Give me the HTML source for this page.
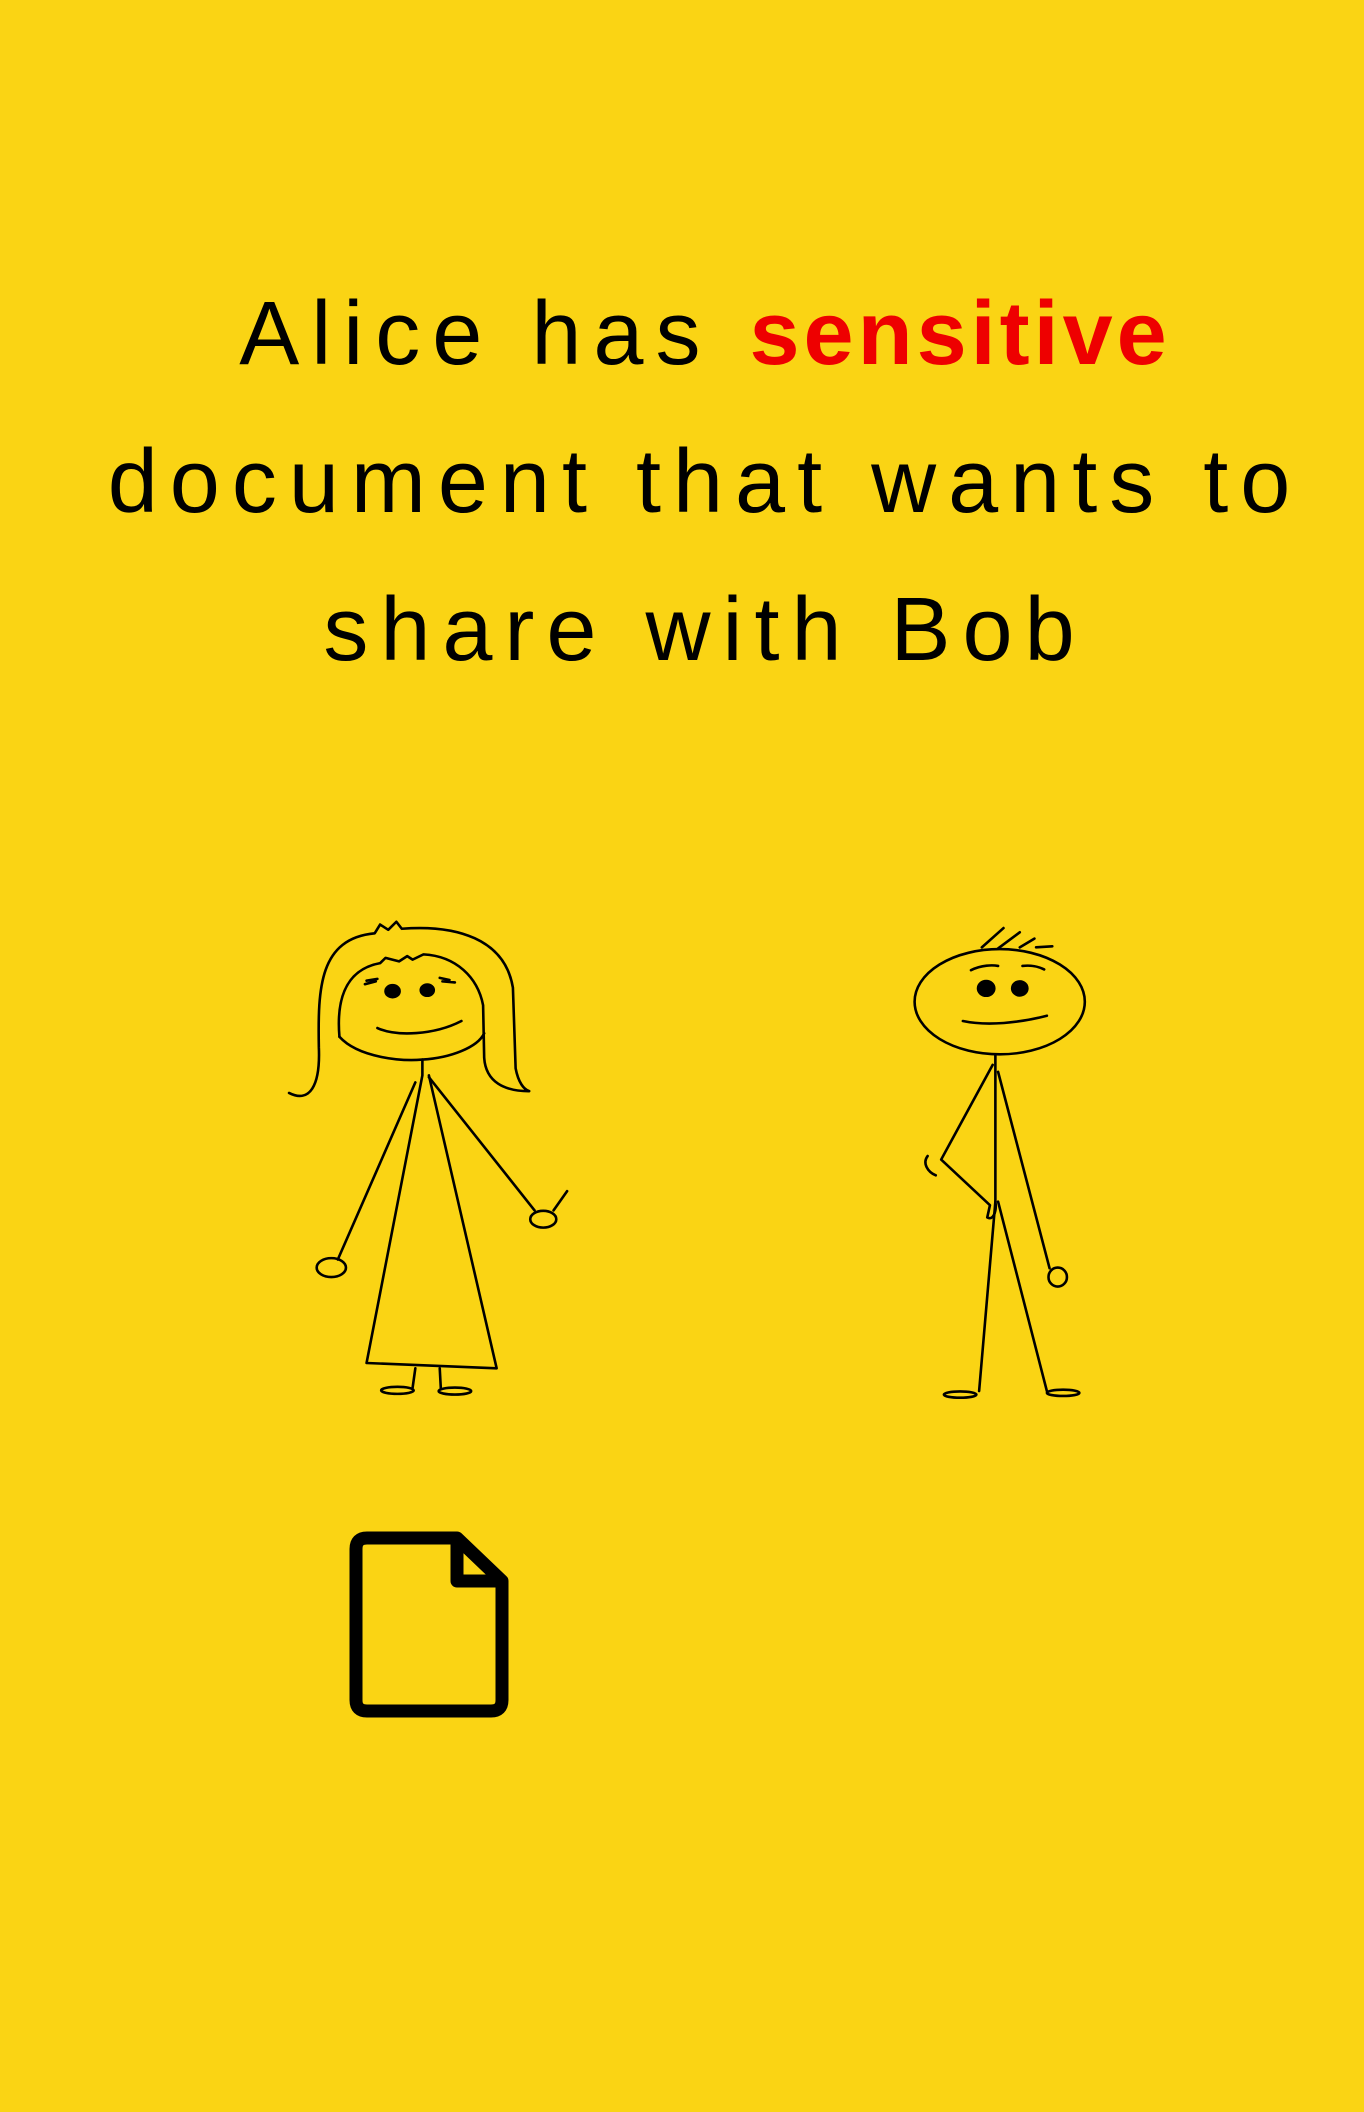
<!DOCTYPE html>
<html><head><meta charset="utf-8"><style>
html,body{margin:0;padding:0}
body{width:1364px;height:2112px;background:#FAD414;position:relative;overflow:hidden;font-family:"Liberation Sans",sans-serif;}
.l{position:absolute;left:0;width:1410px;text-align:center;font-size:90px;letter-spacing:12px;color:#000;white-space:nowrap;line-height:1;}
.r{color:#EE0000;font-weight:bold;letter-spacing:4px}
svg.f *{vector-effect:non-scaling-stroke}
</style></head><body>
<div class="l" style="top:289px">Alice has <span class="r">sensitive</span></div>
<div class="l" style="top:437px">document that wants to</div>
<div class="l" style="top:585px">share with Bob</div>

<svg class="f" style="position:absolute;left:250px;top:900px" width="850" height="550" viewBox="0 0 1568 1568" preserveAspectRatio="none" fill="none" stroke="#000" stroke-width="2.6" stroke-linecap="round" stroke-linejoin="round">
<!-- Alice -->
<path d="M72,550 C110,580 130,530 127,420 C125,250 128,110 230,95 L240,70 L255,85 L270,62 L280,82 C380,70 470,110 485,250 L490,480 C495,520 505,540 515,545 C470,545 435,520 432,450 L430,300 C420,220 380,160 320,155 L300,170 L290,160 L275,175 L250,165 L240,180 C170,200 160,300 165,390"/>
<path d="M165,390 C200,450 280,460 318,455 C370,450 420,420 432,380"/>
<ellipse cx="263" cy="260" rx="13" ry="17" fill="#000"/>
<ellipse cx="327" cy="257" rx="12" ry="16" fill="#000"/>
<path d="M215,230 L235,225 M212,240 L232,232 M350,222 L368,228 M355,232 L378,235"/>
<path d="M235,365 C270,390 340,385 390,345"/>
<path d="M318,455 L318,500 M318,500 L215,1320 L455,1335 L330,500"/>
<path d="M305,520 L162,1025"/>
<ellipse cx="150" cy="1048" rx="27" ry="27"/>
<path d="M330,505 L525,885"/>
<ellipse cx="541" cy="910" rx="24" ry="24"/>
<path d="M560,885 L585,830"/>
<path d="M305,1335 L300,1390 M350,1335 L352,1392"/>
<ellipse cx="272" cy="1398" rx="30" ry="10"/>
<ellipse cx="378" cy="1400" rx="30" ry="10"/>
<!-- Bob -->
<ellipse cx="1383" cy="290" rx="157" ry="150"/>
<path d="M1350,135 L1390,80 M1380,138 L1420,92 M1420,135 L1447,110 M1450,135 L1480,132"/>
<path d="M1330,200 C1350,185 1370,185 1380,188 M1425,188 C1440,185 1455,190 1465,198"/>
<ellipse cx="1358" cy="252" rx="15" ry="21" fill="#000"/>
<ellipse cx="1420" cy="252" rx="14" ry="20" fill="#000"/>
<path d="M1315,345 C1360,360 1420,350 1470,330"/>
<path d="M1375,440 L1375,860 L1345,1400 M1380,860 L1470,1400 M1380,490 L1475,1050"/>
<ellipse cx="1310" cy="1410" rx="30" ry="9"/>
<ellipse cx="1500" cy="1405" rx="30" ry="9"/>
<ellipse cx="1490" cy="1075" rx="17" ry="27"/>
<path d="M1370,470 L1275,740 L1365,870 L1360,905 C1370,915 1378,890 1375,860"/>
<path d="M1250,730 C1240,750 1250,775 1265,785"/>
</svg>

<svg style="position:absolute;left:340px;top:1525px" width="180" height="200" viewBox="0 0 180 200" fill="none" stroke="#000" stroke-width="13" stroke-linejoin="round">
<path d="M27,13 L117,13 L162,56 L162,175 Q162,186 151,186 L27,186 Q16,186 16,175 L16,24 Q16,13 27,13 Z"/>
<path d="M117,13 L117,56 L162,56"/>
</svg>
</body></html>
